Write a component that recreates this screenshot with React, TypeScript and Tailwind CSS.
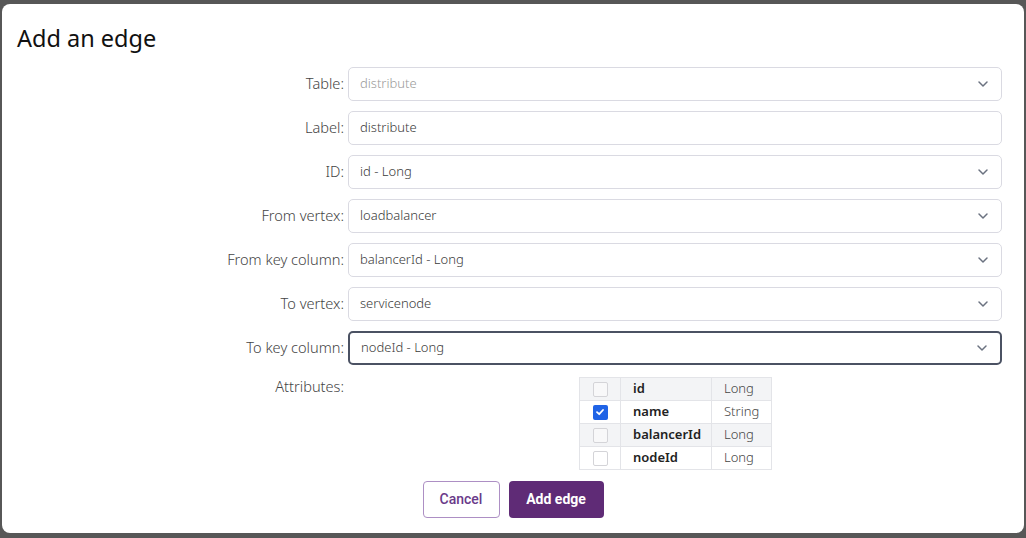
import React from "react";

const Chevron = () => (
  <svg width="12" height="12" viewBox="0 0 12 12" className="shrink-0">
    <path d="M2 4 L6 8 L10 4" fill="none" stroke="#6b7280" strokeWidth="1.5" strokeLinecap="round" strokeLinejoin="round" />
  </svg>
);

type Row = { label: string; value: string; select?: boolean; disabled?: boolean; focused?: boolean };

const rows: Row[] = [
  { label: "Table:", value: "distribute", select: true, disabled: true },
  { label: "Label:", value: "distribute" },
  { label: "ID:", value: "id - Long", select: true },
  { label: "From vertex:", value: "loadbalancer", select: true },
  { label: "From key column:", value: "balancerId - Long", select: true },
  { label: "To vertex:", value: "servicenode", select: true },
  { label: "To key column:", value: "nodeId - Long", select: true, focused: true },
];

const attrs = [
  { name: "id", type: "Long", checked: false, shade: true },
  { name: "name", type: "String", checked: true, shade: false },
  { name: "balancerId", type: "Long", checked: false, shade: true },
  { name: "nodeId", type: "Long", checked: false, shade: false },
];

export default function App() {
  return (
    <div className="w-[1026px] h-[538px] bg-[#575757] overflow-hidden pt-[4px] pl-[2px]" style={{ fontFamily: '"Noto Sans", "Open Sans", sans-serif' }}>
      <div className="w-[1022px] h-[529px] bg-white rounded-[8px] flex flex-col">
        <h1 className="text-[23.5px] leading-[30px] text-[#111] pl-[15px] pt-[19px] font-normal">Add an edge</h1>
        <div className="grid grid-cols-[342px_654px] gap-x-[4px] gap-y-[10px] mt-[14px]">
          {rows.map((r) => (
            <React.Fragment key={r.label}>
              <div className="text-right text-[14.6px] text-[#444] h-[34px] flex items-center justify-end font-light">{r.label}</div>
              <div
                className={
                  "h-[34px] rounded-[5px] bg-white flex items-center justify-between pl-[11px] pr-[12px] text-[13px] font-light " +
                  (r.focused ? "border-2 border-[#4b5263] pl-[10px] pr-[11px]" : "border border-[#dadae2]") +
                  (r.disabled ? " text-[#9a9a9a]" : " text-[#3a3a3a]")
                }
              >
                <span>{r.value}</span>
                {r.select && <Chevron />}
              </div>
            </React.Fragment>
          ))}
          <div className="text-right text-[14.6px] text-[#444] font-light pt-[1px]">Attributes:</div>
          <div className="flex justify-center pt-[2px] pl-[1px]">
            <table className="border-collapse text-[13px]">
              <tbody>
                {attrs.map((a) => (
                  <tr key={a.name} className={a.shade ? "bg-[#f3f4f6]" : "bg-white"}>
                    <td className="border border-[#e3e4e8] w-[41px] h-[23px] p-0">
                      <div className="flex justify-center items-center">
                        {a.checked ? (
                          <div className="w-[15px] h-[15px] bg-[#1f63e6] rounded-[2px] flex items-center justify-center">
                            <svg width="10" height="10" viewBox="0 0 10 10">
                              <path d="M2 5.2 L4.2 7.2 L8 3" fill="none" stroke="white" strokeWidth="1.8" strokeLinecap="round" strokeLinejoin="round" />
                            </svg>
                          </div>
                        ) : (
                          <div className="w-[15px] h-[15px] border border-[#d4d4d8] bg-white/40 rounded-[2px]" />
                        )}
                      </div>
                    </td>
                    <td className="border border-[#e3e4e8] w-[91px] h-[23px] pl-[12px] font-semibold text-[#222]">{a.name}</td>
                    <td className="border border-[#e3e4e8] w-[60px] h-[23px] pl-[12px] text-[#444] font-light">{a.type}</td>
                  </tr>
                ))}
              </tbody>
            </table>
          </div>
        </div>
        <div className="flex justify-center gap-[9px] mt-[11px]" style={{ fontFamily: "Roboto, sans-serif" }}>
          <button className="w-[77px] h-[37px] rounded-[4px] border border-[#ad8fc4] text-[#6a3a8a] text-[14px] font-medium bg-white">Cancel</button>
          <button className="w-[95px] h-[37px] rounded-[4px] bg-[#5f2b76] text-white text-[14px] font-bold">Add edge</button>
        </div>
      </div>
    </div>
  );
}
